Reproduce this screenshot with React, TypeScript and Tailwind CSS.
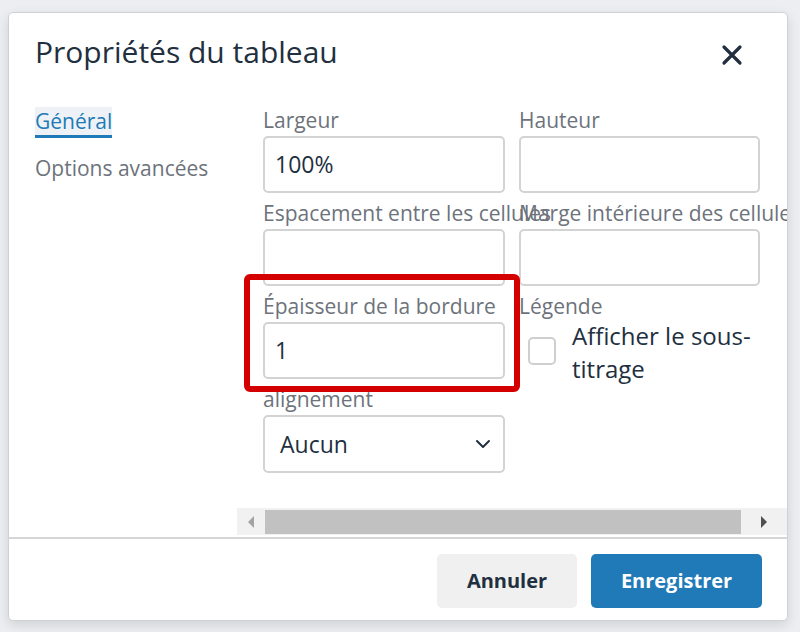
import React from 'react';

const font = { fontFamily: '"Open Sans", "Noto Sans", sans-serif' };

function Field({ label, value, children }: { label: string; value?: string; children?: React.ReactNode }) {
  return (
    <div className="flex flex-col">
      <label className="h-[36px] whitespace-nowrap text-[21px] leading-[28px] text-[#6d737b] pt-[6px]">{label}</label>
      {children ?? (
        <div className="h-[57px] rounded-[5px] border-2 border-[#d3d3d3] bg-white px-[10px] flex items-center text-[23px] text-[#222f3e]">
          {value}
        </div>
      )}
    </div>
  );
}

export default function App() {
  return (
    <div className="w-[800px] h-[632px] bg-[#eceef1] pt-[12px] pl-[8px] overflow-hidden" style={font}>
      <div className="w-[780px] h-[609px] bg-white border border-[#cfd2d6] rounded-[5px] shadow-[0_4px_12px_rgba(0,0,0,0.12)] flex flex-col">
        {/* header */}
        <div className="flex items-start justify-between pl-[26px] pr-[44px] pt-[19px] h-[86px] shrink-0">
          <h1 className="text-[30px] text-[#222f3e] leading-[40px]">Propriétés du tableau</h1>
          <svg width="22" height="22" viewBox="0 0 22 22" className="mt-[12px]">
            <path d="M3 3l16 16M19 3L3 19" stroke="#222f3e" strokeWidth="3.2" strokeLinecap="round" />
          </svg>
        </div>

        {/* body */}
        <div className="flex flex-1 min-h-0">
          <nav className="w-[228px] pl-[26px] pt-[8px] flex flex-col gap-[16px] text-[21px] leading-[28px]">
            <span className="self-start bg-[#eef2f6] text-[#207ab7] border-b-[3px] border-[#207ab7]">Général</span>
            <span className="text-[#6d737b]">Options avancées</span>
          </nav>
          <div className="flex-1 flex flex-col overflow-hidden">
            <div className="flex-1 pl-[26px] pt-[1px] relative">
              <div className="grid grid-cols-[242px_241px] gap-x-[14px]">
                <Field label="Largeur" value="100%" />
                <Field label="Hauteur" />
                <Field label="Espacement entre les cellules" />
                <Field label="Marge intérieure des cellules" />
                <Field label="Épaisseur de la bordure" value="1" />
                <Field label="Légende">
                  <div className="flex items-start gap-[16px] pl-[9px] h-[57px]">
                    <span className="mt-[15px] w-[28px] h-[28px] shrink-0 rounded-[5px] border-2 border-[#cfcfcf] bg-white" />
                    <span className="text-[24px] leading-[33px] text-[#222f3e] -mt-[3px] w-[195px]">Afficher le sous-titrage</span>
                  </div>
                </Field>
                <Field label="alignement">
                  <div className="h-[58px] rounded-[5px] border-2 border-[#d3d3d3] bg-white pl-[15px] pr-[12px] flex items-center justify-between text-[23px] text-[#222f3e]">
                    <span>Aucun</span>
                    <svg width="16" height="10" viewBox="0 0 16 10">
                      <path d="M2 2l6 6 6-6" stroke="#222f3e" strokeWidth="2" fill="none" strokeLinecap="round" strokeLinejoin="round" />
                    </svg>
                  </div>
                </Field>
              </div>
              <div className="absolute left-[7px] top-[175px] w-[276px] h-[118px] border-[6px] border-[#d40000] rounded-[6px] pointer-events-none" />
            </div>
            {/* scrollbar */}
            <div className="h-[27px] bg-[#f1f1f1] flex items-center mb-[2px]">
              <div className="w-[28px] flex justify-center">
                <svg width="8" height="12" viewBox="0 0 8 12"><path d="M7 0L1 6l6 6z" fill="#a3a3a3" /></svg>
              </div>
              <div className="flex-1 h-[24px] bg-[#c1c1c1]" />
              <div className="w-[46px] flex justify-center">
                <svg width="8" height="12" viewBox="0 0 8 12"><path d="M1 0l6 6-6 6z" fill="#505050" /></svg>
              </div>
            </div>
          </div>
        </div>

        {/* footer */}
        <div className="border-t-2 border-[#d6d6d6] h-[83px] shrink-0 flex items-start justify-end gap-[14px] pt-[15px] pr-[25px]">
          <button className="w-[140px] h-[54px] rounded-[5px] bg-[#f0f0f0] text-[20px] font-bold text-[#222f3e]">Annuler</button>
          <button className="w-[171px] h-[54px] rounded-[5px] bg-[#207ab7] text-[20px] font-bold text-white">Enregistrer</button>
        </div>
      </div>
    </div>
  );
}
